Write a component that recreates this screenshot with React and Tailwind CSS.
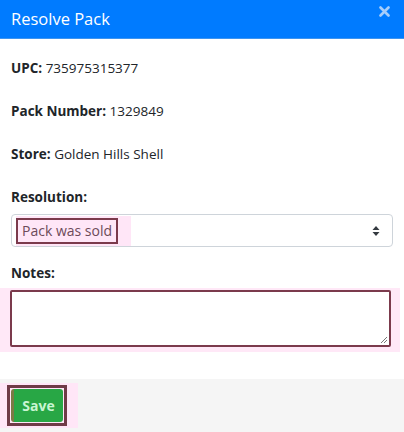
import React from 'react';

const App = () => {
  return (
    <div
      className="w-[404px] h-[432px] bg-white text-[#212529] flex flex-col overflow-hidden"
      style={{ fontFamily: '"Open Sans", "Noto Sans", sans-serif' }}
    >
      <div className="h-[39px] bg-[#007bff] border-b border-[#3d94f0] flex items-start justify-between pl-[11px] pr-[14px] shrink-0">
        <h2 className="text-white text-[16.5px] leading-[38px]">Resolve Pack</h2>
        <svg width="11" height="11" viewBox="0 0 11 11" className="mt-[6px]">
          <path d="M1.5 1.5 L9.5 9.5 M9.5 1.5 L1.5 9.5" stroke="#a6cdfb" strokeWidth="2.6" strokeLinecap="round" />
        </svg>
      </div>

      <div className="px-[11px] pt-[18px] text-[13.5px] leading-[22px]">
        <p className="mb-[21px]"><b>UPC:</b> 735975315377</p>
        <p className="mb-[21px]"><b>Pack Number:</b> 1329849</p>
        <p className="mb-[21px]"><b>Store:</b> Golden Hills Shell</p>
        <p className="font-bold mb-[6px]">Resolution:</p>
        <div className="h-[33px] border border-[#ced4da] rounded-[4px] flex items-center justify-between pl-[4px] pr-[12px]">
          <div className="bg-[#ffe6f7] pr-[13px] py-[2px]">
            <div className="border-2 border-[#7b3a4c] px-[4px] h-[26px] flex items-center text-[#6d4a59] text-[14px]">
              Pack was sold
            </div>
          </div>
          <svg width="8" height="12" viewBox="0 0 8 12" className="text-[#343a40]">
            <path d="M4 1 L7.5 5 H0.5 Z" fill="currentColor" />
            <path d="M4 11 L7.5 7 H0.5 Z" fill="currentColor" />
          </svg>
        </div>
        <p className="font-bold mt-[15px] mb-[4px]">Notes:</p>
      </div>

      <div className="bg-[#ffe8f7] w-[400px] pl-[10px] pr-[9px] pt-[2px] pb-[5px]">
        <div className="relative h-[57px] border-2 border-[#7b3a4c] rounded-[2px] bg-white">
          <svg width="8" height="8" viewBox="0 0 8 8" className="absolute right-[1px] bottom-[1px]">
            <path d="M7 1 L1 7 M7 4 L4 7" stroke="#777" strokeWidth="1" />
          </svg>
        </div>
      </div>

      <div className="flex-1" />

      <div className="h-[53px] bg-[#f5f5f5] flex items-start pt-[4px]">
        <div className="bg-[#ffe6f7] pl-[7px] pr-[11px] py-[2px]">
          <div className="border-[3px] border-[#6f3b47] p-px">
            <button className="bg-[#28a745] text-[#c9f5d2] font-bold text-[14px] h-[33px] w-[52px] rounded-[3px] border-l-[3px] border-[#7a7a45]">
              Save
            </button>
          </div>
        </div>
      </div>
    </div>
  );
};

export default App;
